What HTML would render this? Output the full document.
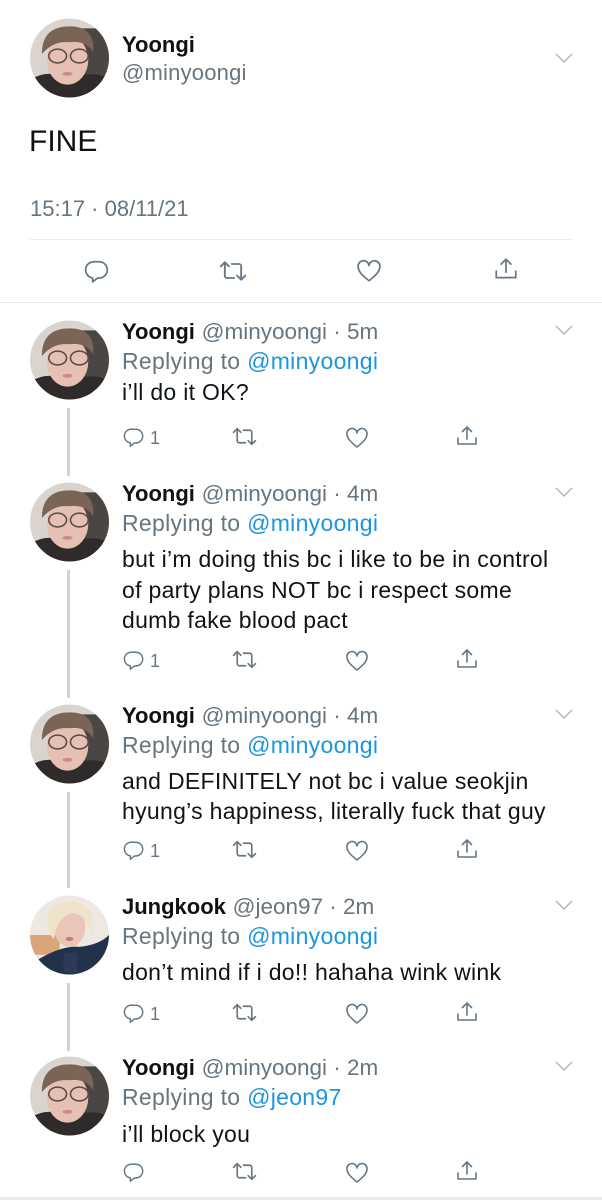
<!DOCTYPE html>
<html><head><meta charset="utf-8">
<style>
*{margin:0;padding:0;box-sizing:border-box}
body{width:602px;height:1200px;background:#fff;font-family:"Liberation Sans",Arial,sans-serif;position:relative;overflow:hidden;color:#0f1419}
.a{position:absolute}
.t{position:absolute;white-space:nowrap;font-size:23px;line-height:26px;letter-spacing:0.3px}
.b{font-weight:bold;color:#111;font-size:22px;letter-spacing:0}
.g{color:#66757f}
.h{letter-spacing:0;font-size:22.5px}
.l{color:#1b95e0}
.ic{position:absolute;width:22px;height:22px;fill:none;stroke:#657786;stroke-width:1.6;stroke-linecap:round;stroke-linejoin:round}
.n{position:absolute;font-size:18px;color:#657786}
.chev{position:absolute;width:18px;height:10px;fill:none;stroke:#aab8c2;stroke-width:1.5}
.thread{position:absolute;left:67px;width:3px;background:#ccd6dd}
</style></head><body>

<svg width="0" height="0" style="position:absolute">
<defs>
<symbol id="av" viewBox="0 0 80 80">
<clipPath id="cc"><circle cx="40" cy="40" r="40"/></clipPath>
<g clip-path="url(#cc)">
<rect width="80" height="80" fill="#d9d4cd"/>
<rect x="50" y="10" width="30" height="70" fill="#4a4644"/>
<path d="M0 62 Q20 50 40 62 Q60 52 80 60 L80 80 L0 80Z" fill="#2e2b2a"/>
<ellipse cx="38" cy="42" rx="21" ry="25" fill="#e6c1b3"/>
<path d="M12 36 Q12 8 40 8 Q66 8 64 34 Q56 22 40 24 Q24 22 12 36Z" fill="#7a6455"/>
<ellipse cx="28" cy="38" rx="9" ry="7" fill="none" stroke="#5a4a48" stroke-width="1.6"/>
<ellipse cx="50" cy="38" rx="9" ry="7" fill="none" stroke="#5a4a48" stroke-width="1.6"/>
<ellipse cx="38" cy="56" rx="5" ry="2" fill="#c98b86"/>
</g>
</symbol>
<symbol id="av2" viewBox="0 0 80 80">
<clipPath id="cc2"><circle cx="40" cy="40" r="40"/></clipPath>
<g clip-path="url(#cc2)">
<rect width="80" height="80" fill="#eee8e2"/>
<rect x="0" y="40" width="30" height="20" fill="#d9a679"/>
<path d="M0 70 Q30 50 50 52 Q70 50 80 40 L80 80 L0 80Z" fill="#22324a"/>
<rect x="34" y="58" width="14" height="20" fill="#2c3a58"/>
<ellipse cx="40" cy="32" rx="16" ry="20" fill="#e9c6b8"/>
<path d="M18 36 Q14 6 42 6 Q68 8 62 40 Q58 20 44 18 Q28 20 24 44Z" fill="#efe3c9"/>
<ellipse cx="40" cy="44" rx="4" ry="2" fill="#c77c7a"/>
</g>
</symbol>
<symbol id="rp" viewBox="0 0 24 24"><path d="M10 3.5h4a7.5 7.5 0 0 1 0 15h-1.5L8 22v-3.6A7.5 7.5 0 0 1 10 3.5z"/></symbol>
<symbol id="rt" viewBox="0 0 24 24"><path d="M1.5 8l3.5-3.5L8.5 8M5 5v11a2 2 0 0 0 2 2H13M22.5 16l-3.5 3.5L15.5 16M19 19V8a2 2 0 0 0-2-2H11"/></symbol>
<symbol id="hr" viewBox="0 0 24 24"><path d="M12 21C5 15.5 2 12 2 8a5 5 0 0 1 10-1 5 5 0 0 1 10 1c0 4-3 7.5-10 13z"/></symbol>
<symbol id="sh" viewBox="0 0 24 24"><path d="M12 15V3M7.5 7.5L12 3l4.5 4.5M3 14v6h18v-6"/></symbol>
</defs>
</svg>

<!-- main tweet -->
<svg class="a" style="left:30px;top:18px" width="79" height="80"><use href="#av"/></svg>
<div class="t" style="left:122px;top:31px"><span class="b">Yoongi</span></div>
<div class="t g" style="left:122px;top:60px;font-size:22px;letter-spacing:0.2px">@minyoongi</div>
<svg class="chev" style="left:555px;top:53px" viewBox="0 0 18 10"><path d="M1 1l8 8 8-8"/></svg>
<div class="t" style="left:29px;top:125px;font-size:30px;line-height:34px;color:#111;letter-spacing:0">FINE</div>
<div class="t g" style="left:30px;top:196px;font-size:22px;letter-spacing:0">15:17 · 08/11/21</div>
<div class="a" style="left:30px;top:239px;width:543px;height:1px;background:#e6ecf0"></div>
<svg class="ic" style="left:84px;top:258px;width:26px;height:26px"><use href="#rp"/></svg>
<svg class="ic" style="left:218px;top:257px;width:30px;height:28px"><use href="#rt"/></svg>
<svg class="ic" style="left:356px;top:258px;width:26px;height:26px"><use href="#hr"/></svg>
<svg class="ic" style="left:493px;top:256px;width:26px;height:26px"><use href="#sh"/></svg>
<div class="a" style="left:0;top:302px;width:602px;height:1px;background:#e6ecf0"></div>

<!-- reply 1 -->
<svg class="a" style="left:30px;top:320px" width="79" height="80"><use href="#av"/></svg>
<div class="thread" style="top:408px;height:68px"></div>
<div class="t" style="left:122px;top:318px"><span class="b">Yoongi</span> <span class="g h">@minyoongi · 5m</span></div>
<div class="t g" style="left:122px;top:348px">Replying to <span class="l">@minyoongi</span></div>
<div class="t" style="left:122px;top:379px">i’ll do it OK?</div>
<svg class="chev" style="left:555px;top:325px" viewBox="0 0 18 10"><path d="M1 1l8 8 8-8"/></svg>
<svg class="ic" style="left:123px;top:426px"><use href="#rp"/></svg><div class="n" style="left:150px;top:428px">1</div>
<svg class="ic" style="left:231px;top:424px;width:27px;height:25px"><use href="#rt"/></svg>
<svg class="ic" style="left:345px;top:426px;width:24px;height:24px"><use href="#hr"/></svg>
<svg class="ic" style="left:455px;top:424px;width:24px;height:24px"><use href="#sh"/></svg>

<!-- reply 2 -->
<svg class="a" style="left:30px;top:482px" width="79" height="80"><use href="#av"/></svg>
<div class="thread" style="top:570px;height:128px"></div>
<div class="t" style="left:122px;top:480px"><span class="b">Yoongi</span> <span class="g h">@minyoongi · 4m</span></div>
<div class="t g" style="left:122px;top:510px">Replying to <span class="l">@minyoongi</span></div>
<div class="t" style="left:122px;top:546px">but i’m doing this bc i like to be in control</div>
<div class="t" style="left:122px;top:577px">of party plans NOT bc i respect some</div>
<div class="t" style="left:122px;top:607px">dumb fake blood pact</div>
<svg class="chev" style="left:555px;top:487px" viewBox="0 0 18 10"><path d="M1 1l8 8 8-8"/></svg>
<svg class="ic" style="left:123px;top:649px"><use href="#rp"/></svg><div class="n" style="left:150px;top:651px">1</div>
<svg class="ic" style="left:231px;top:647px;width:27px;height:25px"><use href="#rt"/></svg>
<svg class="ic" style="left:345px;top:649px;width:24px;height:24px"><use href="#hr"/></svg>
<svg class="ic" style="left:455px;top:647px;width:24px;height:24px"><use href="#sh"/></svg>

<!-- reply 3 -->
<svg class="a" style="left:30px;top:704px" width="79" height="80"><use href="#av"/></svg>
<div class="thread" style="top:792px;height:96px"></div>
<div class="t" style="left:122px;top:702px"><span class="b">Yoongi</span> <span class="g h">@minyoongi · 4m</span></div>
<div class="t g" style="left:122px;top:732px">Replying to <span class="l">@minyoongi</span></div>
<div class="t" style="left:122px;top:768px">and DEFINITELY not bc i value seokjin</div>
<div class="t" style="left:122px;top:798px">hyung’s happiness, literally fuck that guy</div>
<svg class="chev" style="left:555px;top:709px" viewBox="0 0 18 10"><path d="M1 1l8 8 8-8"/></svg>
<svg class="ic" style="left:123px;top:839px"><use href="#rp"/></svg><div class="n" style="left:150px;top:841px">1</div>
<svg class="ic" style="left:231px;top:837px;width:27px;height:25px"><use href="#rt"/></svg>
<svg class="ic" style="left:345px;top:839px;width:24px;height:24px"><use href="#hr"/></svg>
<svg class="ic" style="left:455px;top:837px;width:24px;height:24px"><use href="#sh"/></svg>

<!-- reply 4 -->
<svg class="a" style="left:30px;top:895px" width="79" height="80"><use href="#av2"/></svg>
<div class="thread" style="top:983px;height:68px"></div>
<div class="t" style="left:122px;top:893px"><span class="b">Jungkook</span> <span class="g h">@jeon97 · 2m</span></div>
<div class="t g" style="left:122px;top:923px">Replying to <span class="l">@minyoongi</span></div>
<div class="t" style="left:122px;top:959px">don’t mind if i do!! hahaha wink wink</div>
<svg class="chev" style="left:555px;top:900px" viewBox="0 0 18 10"><path d="M1 1l8 8 8-8"/></svg>
<svg class="ic" style="left:123px;top:1002px"><use href="#rp"/></svg><div class="n" style="left:150px;top:1004px">1</div>
<svg class="ic" style="left:231px;top:1000px;width:27px;height:25px"><use href="#rt"/></svg>
<svg class="ic" style="left:345px;top:1002px;width:24px;height:24px"><use href="#hr"/></svg>
<svg class="ic" style="left:455px;top:1000px;width:24px;height:24px"><use href="#sh"/></svg>

<!-- reply 5 -->
<svg class="a" style="left:30px;top:1056px" width="79" height="80"><use href="#av"/></svg>
<div class="t" style="left:122px;top:1054px"><span class="b">Yoongi</span> <span class="g h">@minyoongi · 2m</span></div>
<div class="t g" style="left:122px;top:1084px">Replying to <span class="l">@jeon97</span></div>
<div class="t" style="left:122px;top:1121px">i’ll block you</div>
<svg class="chev" style="left:555px;top:1061px" viewBox="0 0 18 10"><path d="M1 1l8 8 8-8"/></svg>
<svg class="ic" style="left:123px;top:1161px"><use href="#rp"/></svg>
<svg class="ic" style="left:231px;top:1159px;width:27px;height:25px"><use href="#rt"/></svg>
<svg class="ic" style="left:345px;top:1161px;width:24px;height:24px"><use href="#hr"/></svg>
<svg class="ic" style="left:455px;top:1159px;width:24px;height:24px"><use href="#sh"/></svg>
<div class="a" style="left:0;top:1197px;width:602px;height:3px;background:#e6ecf0"></div>
</body></html>
